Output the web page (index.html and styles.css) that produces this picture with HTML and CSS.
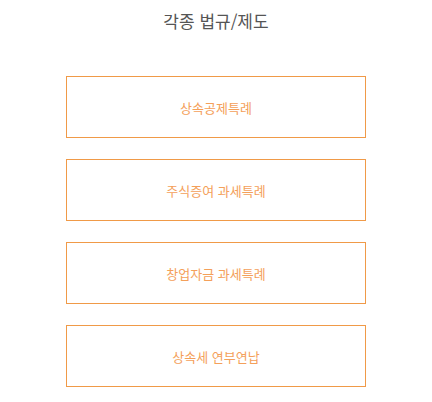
FILE: index.html
```html
<!DOCTYPE html>
<html lang="ko">
<head>
  <meta charset="UTF-8">
  <title>각종 법규/제도</title>
  <link rel="stylesheet" href="styles.css">
</head>
<body>
  <div class="container">
    <h1 class="title">각종 법규/제도</h1>
    <div class="law-list">
      <a class="law-btn" href="#">상속공제특례</a>
      <a class="law-btn" href="#">주식증여 과세특례</a>
      <a class="law-btn" href="#">창업자금 과세특례</a>
      <a class="law-btn" href="#">상속세 연부연납</a>
    </div>
  </div>
</body>
</html>
```

FILE: styles.css
```css
:root {
  --primary-color: #f09a48;
  --text-color: #555;
}

body {
  margin: 0;
  padding: 0;
  background: #fff;
  font-family: "Noto Sans CJK KR", "Noto Sans", sans-serif;
  color: var(--text-color);
}

.container {
  width: 300px;
  margin: 0 auto;
  padding-top: 9px;
}

.title {
  margin: 0 0 43px;
  font-size: 17px;
  font-weight: 400;
  line-height: 24px;
  text-align: center;
  color: #555;
}

.law-list {
  display: flex;
  flex-direction: column;
  gap: 21px;
}

.law-btn {
  display: flex;
  align-items: center;
  justify-content: center;
  height: 60px;
  border: 1px solid var(--primary-color);
  color: #f4a05a;
  font-size: 13px;
  text-decoration: none;
}
```
